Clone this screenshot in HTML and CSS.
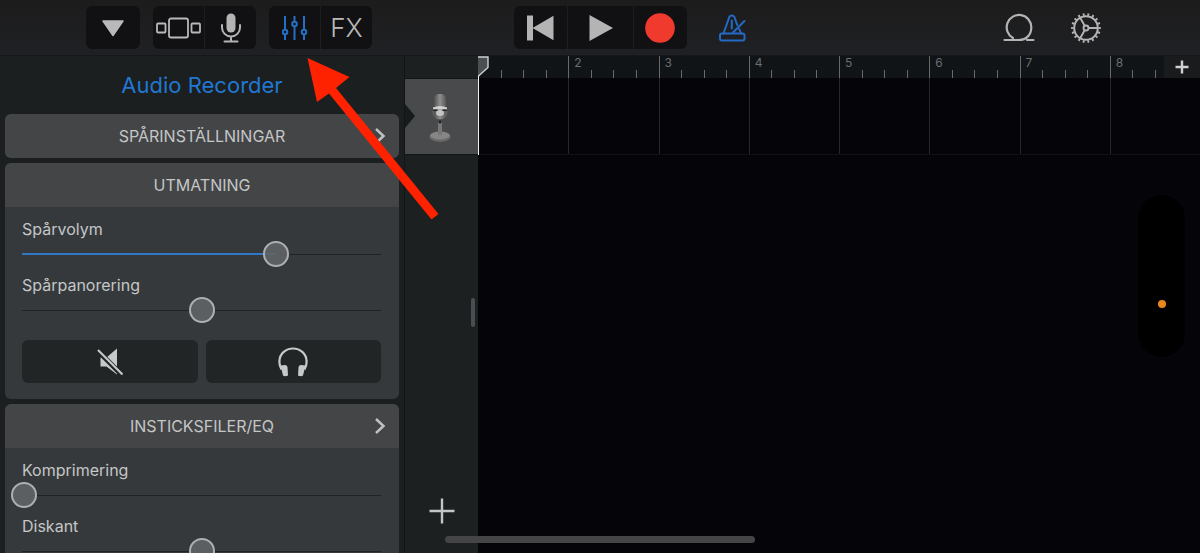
FILE: index.html
```html
<!DOCTYPE html>
<html lang="sv">
<head>
<meta charset="utf-8">
<meta name="viewport" content="width=device-width, initial-scale=1">
<title>Audio Recorder</title>
<link rel="stylesheet" href="styles.css">
</head>
<body>
<div class="app">
  <header class="toolbar">
    <div class="tools">
      <div class="group">
        <button class="tool tool-menu" aria-label="Meny"><svg width="24" height="18" viewBox="0 0 24 18"><path d="M2 2h20L12 16.500z" fill="#b9b9b9" stroke="#b9b9b9" stroke-width="1.500" stroke-linejoin="round"/></svg></button>
      </div>
      <div class="group">
        <button class="tool" aria-label="Ljudväljare"><svg width="46" height="24" viewBox="0 0 46 24" fill="none" stroke="#b9b9b9" stroke-width="1.800"><rect x="1" y="7.500" width="8.500" height="9" rx="1"/><rect x="13" y="2.500" width="19" height="19" rx="2"/><rect x="35.500" y="7.500" width="8.500" height="9" rx="1"/></svg></button>
        <button class="tool" aria-label="Mikrofon"><svg width="22" height="32" viewBox="0 0 22 32" fill="none" stroke="#b4b4b4" stroke-width="2" stroke-linecap="round"><rect x="6.500" y="1.500" width="9" height="19" rx="4.500" fill="#b4b4b4" stroke="none"/><path d="M2 13v2.500a9 9 0 0 0 18 0V13M11 24.500v5M4.500 29.500h13"/></svg></button>
      </div>
      <div class="group">
        <button class="tool" aria-label="Spårreglage" aria-pressed="true"><svg width="26" height="26" viewBox="0 0 26 26" fill="none" stroke="#246fc7" stroke-width="2"><path d="M3 1v13M3 20v5M12.500 1v5M12.500 12v13M22 1v13M22 20v5"/><circle cx="3" cy="17" r="2.300"/><circle cx="12.500" cy="9" r="2.300"/><circle cx="22" cy="17" r="2.300"/></svg></button>
        <button class="tool fx">FX</button>
      </div>
    </div>
    <div class="transport">
      <div class="group">
        <button class="tool to-start" aria-label="Till början"><svg width="28" height="26" viewBox="0 0 28 26" fill="#b4b4b4"><path d="M0 .500h6v25H0zM5.500 13 26.500.700v24.600z"/></svg></button>
        <button class="tool play" aria-label="Spela"><svg width="26" height="28" viewBox="0 0 26 28"><path d="M1.500 1 25 14 1.500 27z" fill="#b4b4b4"/></svg></button>
        <button class="tool" aria-label="Spela in"><svg width="32" height="30" viewBox="0 0 32 30"><circle cx="15" cy="15" r="14.800" fill="#f03a2e"/></svg></button>
      </div>
      <button class="plain metronome" aria-label="Metronom"><svg width="28" height="28" viewBox="0 0 28 28" fill="none" stroke="#2469c4" stroke-width="2" stroke-linecap="round" stroke-linejoin="round"><path d="M4.500 19.500 10.300 3q.8-1.500 2.500-1.500T15.400 3l2.800 8M20.200 15l1.800 4.500M12.800 6.500v8M14 18.500 25.500 7"/><rect x="1" y="19.500" width="24.500" height="7" rx="2"/></svg></button>
    </div>
    <div class="extras">
      <button class="plain" aria-label="Loopar"><svg width="32" height="30" viewBox="0 0 32 30" fill="none" stroke="#b4b4b4" stroke-width="2.200" stroke-linecap="round"><path d="M1.500 27H16c7.500 0 12.300-5.500 12.300-12.500A12.300 12.300 0 1 0 10 25M24 27h6.500"/></svg></button>
      <button class="plain" aria-label="Inställningar"><svg width="32" height="32" viewBox="0 0 32 32" fill="none" stroke="#b4b4b4"><circle cx="16" cy="16" r="11.800" stroke-width="2"/><circle cx="16" cy="16" r="13.600" stroke-width="2.600" pathLength="180" stroke-dasharray="4 6" stroke-dashoffset="2"/><circle cx="16" cy="16" r="2.500" stroke-width="1.900"/><path d="M18.500 16H28M14.700 13.700 10 5.600M14.700 18.300 10 26.400" stroke-width="1.900"/></svg></button>
    </div>
  </header>

  <main class="workspace">
    <section class="panel">
      <h1 class="title">Audio Recorder</h1>
      <div class="card">
        <button class="card-head">SPÅRINSTÄLLNINGAR<svg class="chevron" width="12" height="18" viewBox="0 0 12 18"><path d="m2 2 7.500 7L2 16"/></svg></button>
      </div>
      <div class="card">
        <h2 class="card-head">UTMATNING</h2>
        <div class="card-body">
          <div class="control"><label for="volume">Spårvolym</label><input id="volume" class="slider filled" type="range" value="71" style="--fill:71%"></div>
          <div class="control"><label for="pan">Spårpanorering</label><input id="pan" class="slider" type="range" value="50"></div>
          <div class="switches">
            <button class="switch" aria-label="Ljud av"><svg width="26" height="28" viewBox="0 0 26 28"><path d="M3.500 9.500h6L20 .500v26L9.500 18.500h-6z" fill="#c6c9c9"/><path d="m.5 2.500 25 25" stroke="#212526" stroke-width="5"/><path d="m1 2 24.500 24.500" stroke="#c6c9c9" stroke-width="2.200"/></svg></button>
            <button class="switch" aria-label="Solo"><svg width="30" height="30" viewBox="0 0 30 30" fill="none"><path d="M3.500 22.500C1 18 1.500 14 1.500 14a13.500 12.500 0 0 1 27 0s.5 4-2 8.500" stroke="#c6c9c9" stroke-width="2.200"/><path d="m2.500 18.500 4.500-.500q2 0 2.500 2l.5 8.500q-3 1.500-5 0zM27.500 18.500 23 18q-2 0-2.500 2l-.5 8.500q3 1.500 5 0z" fill="#c6c9c9"/></svg></button>
          </div>
        </div>
      </div>
      <div class="card">
        <button class="card-head">INSTICKSFILER/EQ<svg class="chevron" width="12" height="18" viewBox="0 0 12 18"><path d="m2 2 7.500 7L2 16"/></svg></button>
        <div class="card-body">
          <div class="control"><label for="comp">Komprimering</label><input id="comp" class="slider" type="range" value="0"></div>
          <div class="control"><label for="treble">Diskant</label><input id="treble" class="slider" type="range" value="50"></div>
        </div>
      </div>
    </section>

    <aside class="tracks">
      <button class="track" aria-label="Audio Recorder">
        <svg width="24" height="50" viewBox="0 0 24 50">
          <defs>
            <linearGradient id="metal"><stop offset="0" stop-color="#505050"/><stop offset=".5" stop-color="#8e8e8e"/><stop offset="1" stop-color="#585858"/></linearGradient>
          </defs>
          <ellipse cx="12" cy="44" rx="10.500" ry="5" fill="#676767"/><ellipse cx="12" cy="42.500" rx="10" ry="4" fill="#858585"/>
          <path d="M10 29h4v13h-4z" fill="#777"/><path d="M5 18c0 11 14 11 14 0" fill="none" stroke="#666" stroke-width="1.200"/><circle cx="12" cy="29" r="1.500" fill="#222"/>
          <rect x="6" y="1" width="12" height="25" rx="5" fill="url(#metal)"/>
          <path d="M5 14.500q7-3 14 0v2H5z" fill="#cfcfcf"/><path d="M5 16.500h4.500l1 1.500H6zM19 16.500h-4.500l-1 1.500H18z" fill="#222"/>
          <ellipse cx="12" cy="20" rx="4" ry="3" fill="#c4c4c4"/>
        </svg>
      </button>
      <button class="add-track" aria-label="Lägg till spår"><svg width="26" height="26" viewBox="0 0 26 26"><path d="M13 .500v25M.500 13h25" stroke="#c4c6c6" stroke-width="2.400"/></svg></button>
      <span class="grip"></span>
    </aside>

    <section class="timeline">
      <div class="ruler">
        <div class="bar"><i></i><i></i><i></i><i></i></div>
        <div class="bar"><span>2</span><i></i><i></i><i></i><i></i></div>
        <div class="bar"><span>3</span><i></i><i></i><i></i><i></i></div>
        <div class="bar"><span>4</span><i></i><i></i><i></i><i></i></div>
        <div class="bar"><span>5</span><i></i><i></i><i></i><i></i></div>
        <div class="bar"><span>6</span><i></i><i></i><i></i><i></i></div>
        <div class="bar"><span>7</span><i></i><i></i><i></i><i></i></div>
        <div class="bar"><span>8</span><i></i><i></i><i></i><i></i></div>
      </div>
      <div class="lane"><b></b><b></b><b></b><b></b><b></b><b></b><b></b><b></b></div>
      <button class="add-section" aria-label="Lägg till avsnitt"><svg width="14" height="14" viewBox="0 0 14 14"><path d="M7 .500v13M.500 7h13" stroke="#d0d0d0" stroke-width="2.400"/></svg></button>
      <svg class="playhead" width="12" height="100" viewBox="0 0 12 100"><path d="M0 1h10v10.500L0 20z" fill="#4c4f52"/><path d="M0 1h10v10.500L.5 20" fill="none" stroke="#d0d0d0" stroke-width="1.400"/><path d="M.5 19.500V99" stroke="#f0f0f0"/></svg>
    </section>
  </main>

  <div class="island"><span class="mic-dot"></span></div>
  <div class="home-bar"></div>
  <svg class="pointer" width="140" height="164" viewBox="0 0 140 164"><path d="M7.500 3 49.500 22l-13.500 11L138.500 159l-7 5.500L29 38.500 17 47z" fill="#ff2200"/></svg>
</div>
</body>
</html>
```
FILE: styles.css
```css
* { box-sizing: border-box; }

body {
  margin: 0;
  background: #040409;
  color: #c4c6c7;
  font-family: Inter, "Liberation Sans", sans-serif;
  font-size: 16px;
}

button {
  margin: 0;
  padding: 0;
  border: 0;
  background: none;
  color: inherit;
  font: inherit;
}

svg { display: block; flex: none; }

.app {
  position: relative;
  display: flex;
  flex-direction: column;
  height: 100vh;
  overflow: hidden;
}

/* Toolbar */
.toolbar {
  display: grid;
  grid-template-columns: 428fr 486fr 200fr;
  align-items: center;
  height: 56px;
  padding-left: 86px;
  background: linear-gradient(#1c1c1c, #1f2023 90%);
  border-bottom: 1px solid #15181a;
}

.tools { display: flex; gap: 13px; }
.transport { display: flex; gap: 32px; }
.extras { display: flex; gap: 35px; padding-left: 3px; }

.group {
  display: flex;
  gap: 1px;
  border-radius: 6px;
  overflow: hidden;
}

.tool {
  display: flex;
  align-items: center;
  justify-content: center;
  width: 51px;
  height: 43px;
  background: #111113;
}

.tool-menu { width: 54px; }
.transport .tool { width: 53px; }
.transport .play { width: 65px; }
.fx { font-size: 26px; font-weight: 300; color: #b9b9b9; }
.plain { display: flex; align-items: center; }

/* Settings panel */
.workspace { display: flex; flex: 1; min-height: 0; }

.panel {
  display: flex;
  flex: none;
  flex-direction: column;
  gap: 5px;
  width: 405px;
  padding: 0 5px;
  overflow: hidden;
  background: #1b1f1f;
  border-right: 1px solid #111516;
}

.title {
  flex: none;
  margin: 0;
  height: 53px;
  color: #2177d2;
  font-size: 22px;
  font-weight: 400;
  line-height: 58px;
  text-align: center;
}

.card {
  flex: none;
  overflow: hidden;
  border-radius: 6px;
  background: #35393c;
}

.card-head {
  position: relative;
  display: flex;
  align-items: center;
  justify-content: center;
  width: 100%;
  height: 44px;
  margin: 0;
  background: #434546;
  font-size: 16px;
  font-weight: 400;
}

.chevron {
  position: absolute;
  right: 13px;
  fill: none;
  stroke: #bfc1c1;
  stroke-width: 2.5px;
}

.card-body { padding: 10px 18px 16px 17px; }
.control { margin-bottom: 6px; }
.control label { display: block; line-height: 24px; }

.slider {
  -webkit-appearance: none;
  appearance: none;
  display: block;
  width: calc(100% + 22px);
  height: 26px;
  margin: 0 -11px;
  background: linear-gradient(#1f2324, #1f2324) no-repeat center / calc(100% - 22px) 1px;
}

.filled {
  background:
    linear-gradient(90deg, #2f78c4 var(--fill), transparent var(--fill)) no-repeat center / calc(100% - 22px) 2px,
    linear-gradient(#1f2324, #1f2324) no-repeat center / calc(100% - 22px) 1px;
}

.slider::-webkit-slider-thumb {
  -webkit-appearance: none;
  width: 26px;
  height: 26px;
  border: 2px solid #adafb0;
  border-radius: 50%;
  background: #616466e6;
}

.switches {
  display: grid;
  grid-template-columns: 1fr 1fr;
  gap: 8px;
  margin-top: 17px;
}

.switch {
  display: flex;
  align-items: center;
  justify-content: center;
  height: 43px;
  border-radius: 6px;
  background: #212526;
}

/* Track headers */
.tracks {
  position: relative;
  display: flex;
  flex: none;
  flex-direction: column;
  align-items: center;
  justify-content: space-between;
  width: 73px;
  padding: 22px 0 29px;
  background: #1c2020;
}

.track {
  position: relative;
  display: flex;
  align-items: center;
  justify-content: center;
  width: 100%;
  height: 77px;
  padding: 3px 4px 0 0;
  background: #484a4b;
  border: solid #131617;
  border-width: 1px 0;
}

.track::before {
  content: "";
  position: absolute;
  left: 0;
  top: 25px;
  border: solid transparent;
  border-width: 12px 0 12px 10px;
  border-left-color: #171b1c;
}

.grip {
  position: absolute;
  right: 3px;
  top: 242px;
  width: 4px;
  height: 29px;
  border-radius: 2px;
  background: #4b4e50;
}

/* Timeline */
.timeline { position: relative; flex: 1; min-width: 0; }

.ruler, .lane { display: grid; grid-template-columns: repeat(8, 1fr); }
.ruler { height: 22px; background: #101417; }

.bar {
  position: relative;
  display: grid;
  grid-template-columns: repeat(4, 1fr);
  align-items: end;
}

.bar span {
  position: absolute;
  left: 6px;
  top: 0;
  color: #6c6e70;
  font-size: 12px;
  line-height: 13px;
}

.bar i { height: 8px; border-left: 1px solid #67696b; }
.bar span + i { height: 100%; }
.bar:first-child i:first-child { border: 0; }

.lane { height: 77px; border-bottom: 1px solid #111115; }
.lane b + b { border-left: 1px solid #28282c; }

.add-section {
  position: absolute;
  top: 0;
  right: 0;
  display: flex;
  align-items: center;
  justify-content: center;
  width: 36px;
  height: 22px;
  background: #1a1b1c;
}

.playhead { position: absolute; left: 0; top: 0; }

/* Device overlays */
.island {
  position: absolute;
  right: 15px;
  top: 195px;
  width: 47px;
  height: 162px;
  border-radius: 24px;
  background: #000;
}

.mic-dot {
  position: absolute;
  left: 20px;
  top: 105px;
  width: 8px;
  height: 8px;
  border-radius: 50%;
  background: #e8871f;
}

.home-bar {
  position: absolute;
  left: 445px;
  bottom: 10px;
  width: 310px;
  height: 7px;
  border-radius: 4px;
  background: #454548;
}

.pointer {
  position: absolute;
  left: 300px;
  top: 55px;
  pointer-events: none;
}
```
